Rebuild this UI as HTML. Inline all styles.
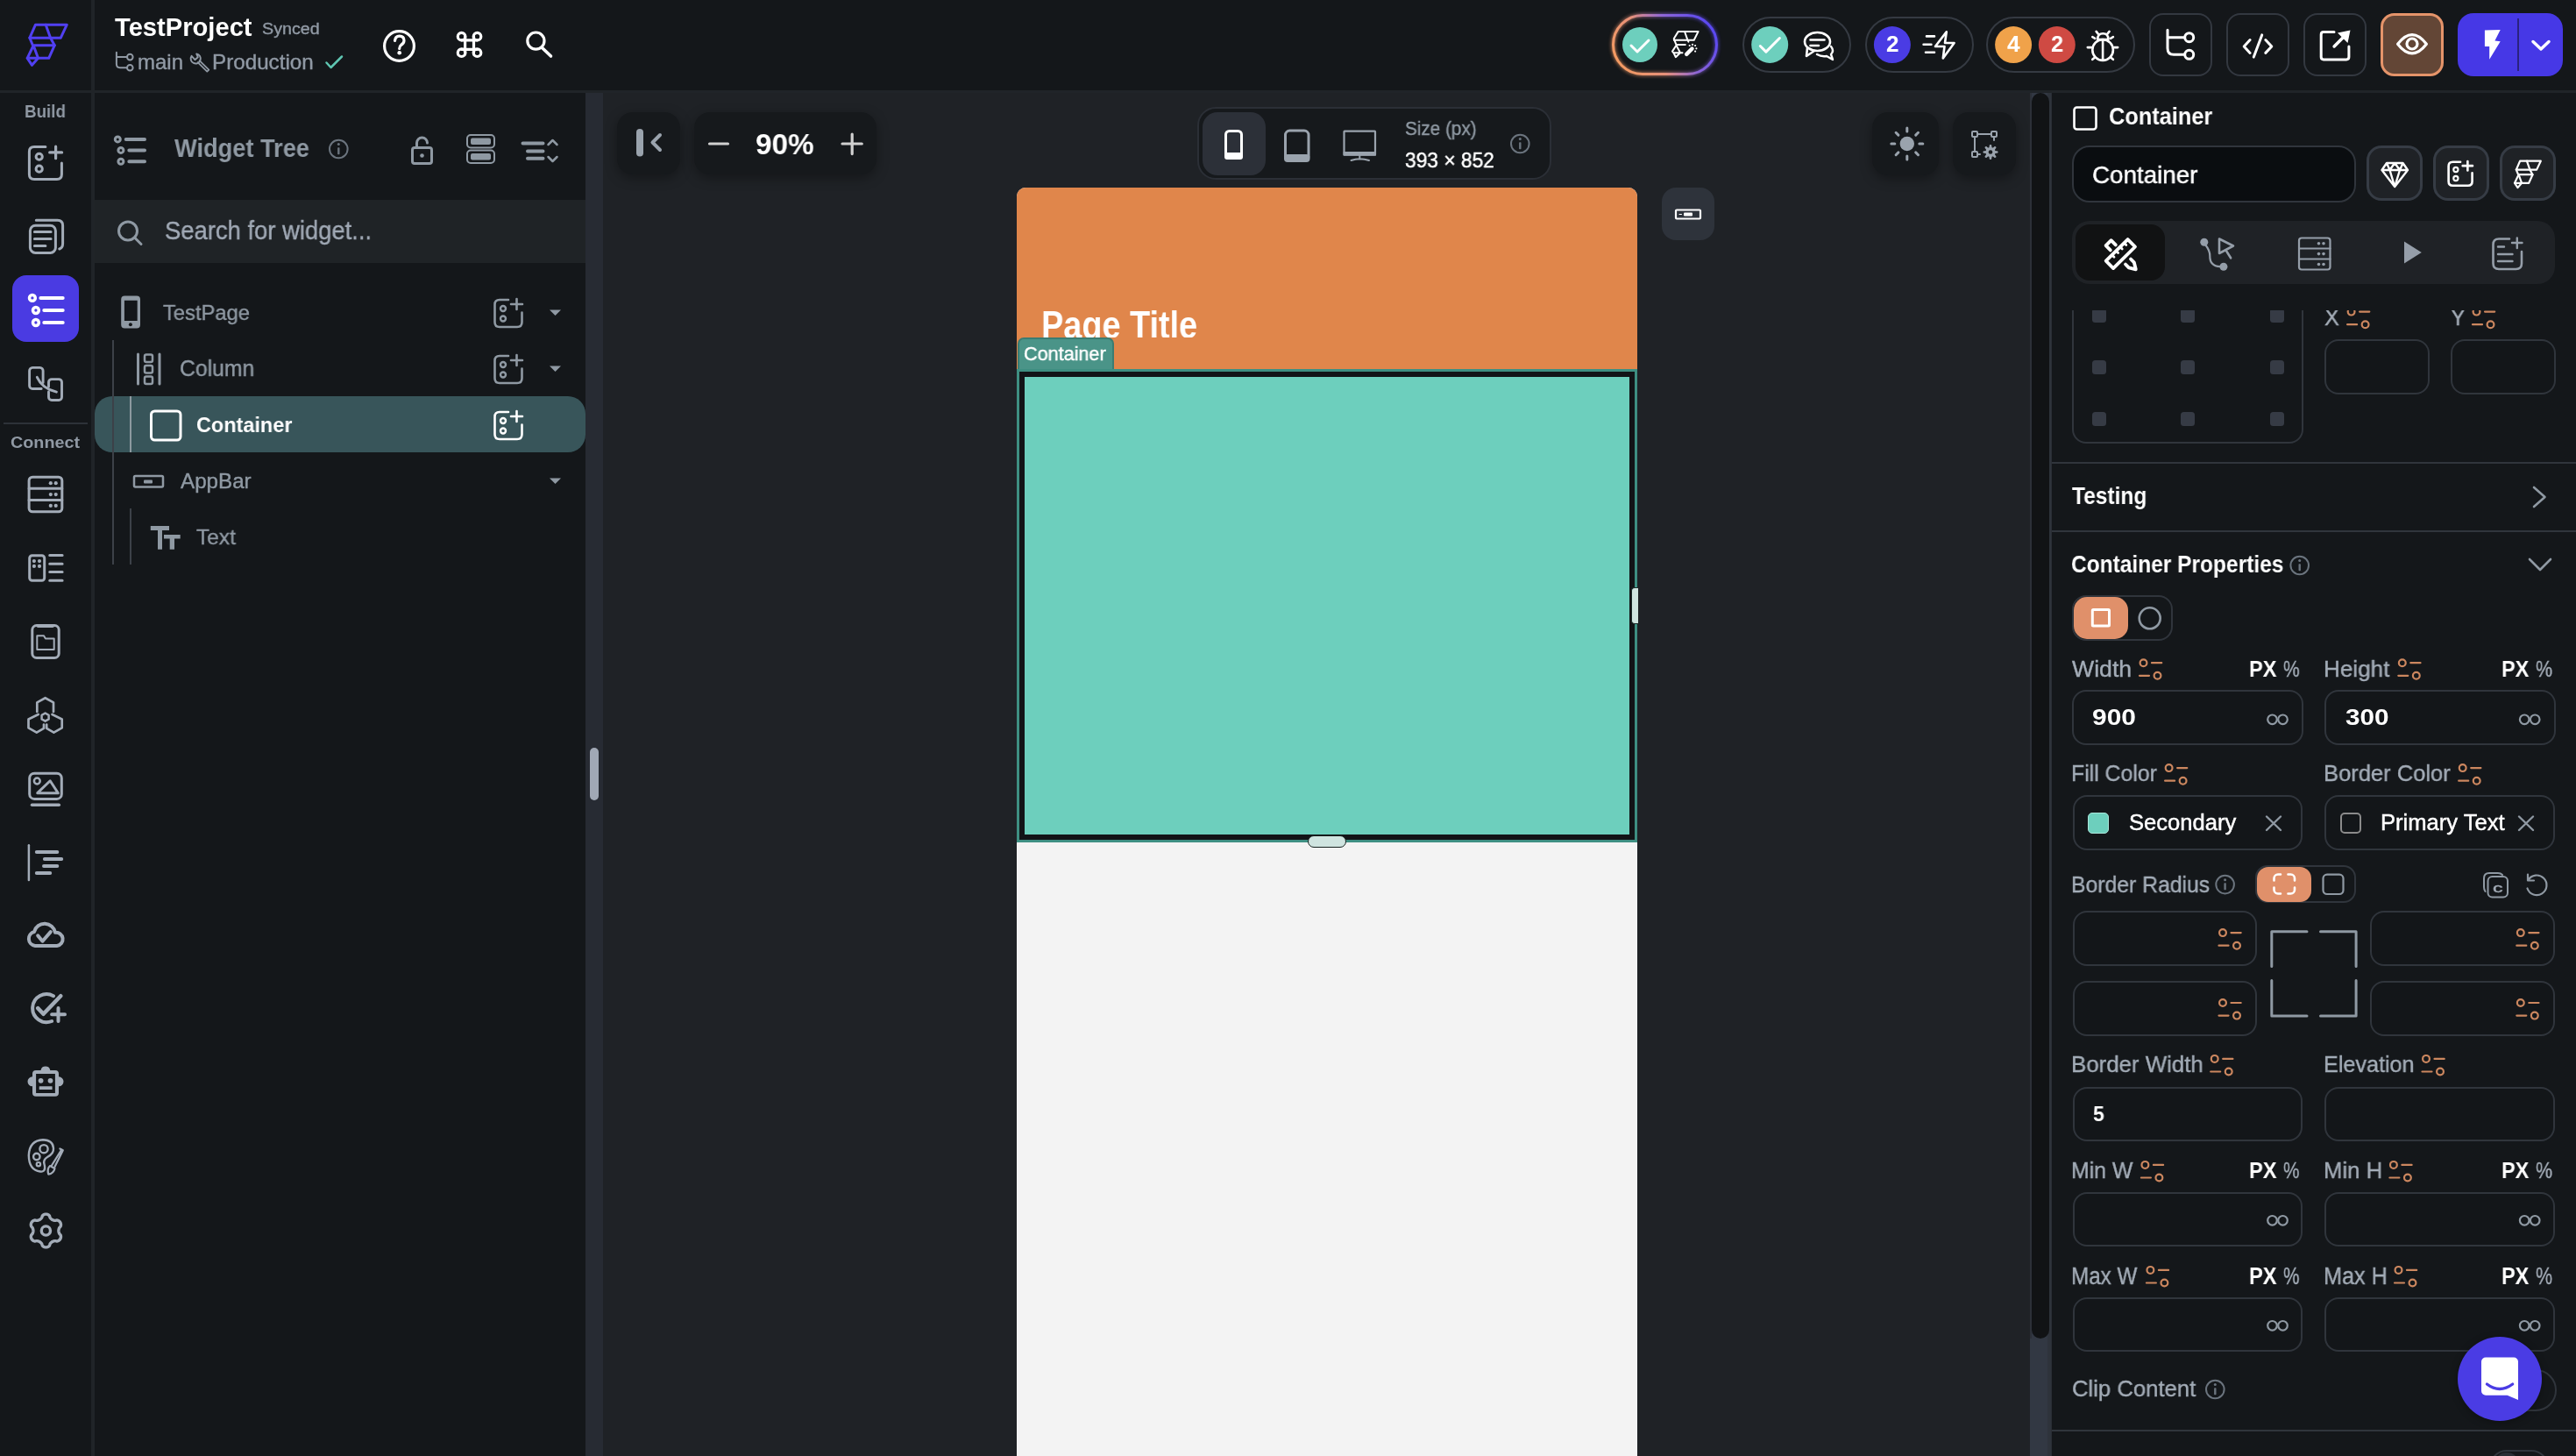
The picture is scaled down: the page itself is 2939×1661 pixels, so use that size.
<!DOCTYPE html><html><head><meta charset="utf-8"><style>
html,body{margin:0;padding:0;width:2939px;height:1661px;overflow:hidden;background:#14171a}
.a{position:absolute}
.t{position:absolute;white-space:nowrap;font-family:"Liberation Sans",sans-serif;transform-origin:0 0;will-change:transform}
.r{-webkit-text-stroke:0.4px currentColor}
.m{-webkit-text-stroke:0.45px currentColor}
</style></head><body>
<div class="a" style="left:0px;top:0px;width:2939px;height:1661px;background:#14171a"></div>
<div class="a" style="left:688px;top:106px;width:1628px;height:1555px;background:#1f2226"></div>
<div class="a" style="left:0px;top:103px;width:2939px;height:3px;background:#202428"></div>
<div class="a" style="left:104px;top:0px;width:4px;height:1661px;background:#202428"></div>
<div class="a" style="left:668px;top:106px;width:20px;height:1555px;background:#272b33"></div>
<div class="a" style="left:673px;top:853px;width:10px;height:60px;background:#a0a8b5;border-radius:5px"></div>
<div class="a" style="left:108px;top:228px;width:560px;height:72px;background:#1f2326"></div>
<div class="a" style="left:2316px;top:106px;width:24px;height:1555px;background:#323843"></div>
<div class="a" style="left:2316px;top:106px;width:2px;height:1421px;background:#2c3038"></div>
<div class="a" style="left:2336px;top:106px;width:4px;height:1555px;background:#2e333b"></div>
<div class="a" style="left:2318px;top:106px;width:20px;height:1421px;background:#111315;border-radius:10px"></div>
<div class="a" style="left:2340px;top:106px;width:1px;height:1555px;background:#2a2e35"></div>
<svg class="a" style="left:0;top:0" width="2939" height="1661" viewBox="0 0 2939 1661">
<path d="M40.5 28.2 L76.3 28.2 L69.3 43.2 L33.9 43.2 Z" stroke="#5140f2" stroke-width="3" stroke-linecap="round" stroke-linejoin="round" fill="none" />
<path d="M52.2 28.2 L57.6 43.2 L62.3 51.7" stroke="#5140f2" stroke-width="3" stroke-linecap="round" stroke-linejoin="round" fill="none" />
<path d="M33.9 43.2 L37.4 51.7 L62.3 51.7 L55.7 66.3 L31.2 66.3 L37.6 53.0" stroke="#5140f2" stroke-width="3" stroke-linecap="round" stroke-linejoin="round" fill="none" />
<path d="M38.4 52.5 L43.5 66.3 L36.5 74.3 L31.2 66.3" stroke="#5140f2" stroke-width="3" stroke-linecap="round" stroke-linejoin="round" fill="none" />
</svg>
<div class="t " style="left:130.7px;top:17.4px;font-size:28.63px;line-height:28.63px;font-weight:700;color:#ffffff;transform:scaleX(1.018);">TestProject</div>
<div class="t r" style="left:299.1px;top:24.4px;font-size:18.90px;line-height:18.90px;font-weight:400;color:#9099a4;transform:scaleX(1.042);">Synced</div>
<svg class="a" style="left:0;top:0" width="2939" height="1661" viewBox="0 0 2939 1661">
<path d="M132.9 59.7 V73 Q132.9 77.2 137 77.2 H145 M132.9 65.1 H145" stroke="#9099a4" stroke-width="2" stroke-linecap="round" stroke-linejoin="round" fill="none" />
<circle cx="148.3" cy="65.1" r="3.3" stroke="#9099a4" stroke-width="2" fill="none"/>
<circle cx="148.3" cy="77.2" r="3.3" stroke="#9099a4" stroke-width="2" fill="none"/>
</svg>
<div class="t r" style="left:157.4px;top:60.3px;font-size:23.69px;line-height:23.69px;font-weight:400;color:#9099a4;transform:scaleX(1.014);">main</div>
<svg class="a" style="left:0;top:0" width="2939" height="1661" viewBox="0 0 2939 1661">
<path d="M218.6 63.8 A5.6 5.6 0 1 0 224.2 61.4 L225.8 65.2 L222.4 68.2 Z" stroke="#9099a4" stroke-width="1.9" stroke-linecap="round" stroke-linejoin="round" fill="none" />
<path d="M227.6 69.2 L238.3 79.6 L236.3 81.6 L225.6 71.2" stroke="#9099a4" stroke-width="1.8" stroke-linecap="round" stroke-linejoin="round" fill="none" />
</svg>
<div class="t r" style="left:241.9px;top:60.3px;font-size:23.69px;line-height:23.69px;font-weight:400;color:#9099a4;transform:scaleX(1.022);">Production</div>
<svg class="a" style="left:0;top:0" width="2939" height="1661" viewBox="0 0 2939 1661">
<path d="M372.5 71.5 L377.5 77 L390 64.5" stroke="#5fc6b2" stroke-width="2.5" stroke-linecap="round" stroke-linejoin="round" fill="none" />
<circle cx="455.5" cy="52.5" r="16.9" stroke="#ffffff" stroke-width="3.2" fill="none"/>
<path d="M450.5 46.5 Q451 41.2 455.7 41.2 Q461 41.2 461 46.3 Q461 49.5 457.5 51.5 Q455.7 52.8 455.7 55.5" stroke="#ffffff" stroke-width="3.2" stroke-linecap="round" stroke-linejoin="round" fill="none" />
<circle cx="455.7" cy="60.2" r="2.3" fill="#ffffff"/>
<circle cx="526.6" cy="41.7" r="4.3" stroke="#ffffff" stroke-width="3.2" fill="none"/>
<circle cx="544.5" cy="41.7" r="4.3" stroke="#ffffff" stroke-width="3.2" fill="none"/>
<circle cx="526.6" cy="60.2" r="4.3" stroke="#ffffff" stroke-width="3.2" fill="none"/>
<circle cx="544.5" cy="60.2" r="4.3" stroke="#ffffff" stroke-width="3.2" fill="none"/>
<path d="M530.6 41.7 V60.2 M540.5 41.7 V60.2 M526.6 45.8 H544.5 M526.6 56.3 H544.5" stroke="#ffffff" stroke-width="3.2" stroke-linecap="round" stroke-linejoin="round" fill="none" />
<circle cx="611.4" cy="46.6" r="9.6" stroke="#ffffff" stroke-width="3.2" fill="none"/>
<path d="M618.5 54.5 L628.5 64" stroke="#ffffff" stroke-width="3.6" stroke-linecap="round" stroke-linejoin="round" fill="none" stroke-linecap="butt"/>
<defs><linearGradient id="pg" gradientUnits="userSpaceOnUse" x1="1850" y1="80" x2="1950" y2="20"><stop offset="0" stop-color="#f49b62"/><stop offset="0.35" stop-color="#e5907a"/><stop offset="0.62" stop-color="#8e66d6"/><stop offset="1" stop-color="#5646f4"/></linearGradient><filter id="glow" x="-20%" y="-40%" width="140%" height="180%"><feGaussianBlur stdDeviation="2" result="b"/><feMerge><feMergeNode in="b"/><feMergeNode in="SourceGraphic"/></feMerge></filter></defs>
<rect x="1840.5" y="17.5" width="118" height="67" rx="33.5" stroke="url(#pg)" stroke-width="3" fill="none" filter="url(#glow)"/>
<circle cx="1871" cy="51" r="20" fill="#6dcfbd"/>
<path d="M1861 52 L1868 59 L1881 46" stroke="#ffffff" stroke-width="3" stroke-linecap="round" stroke-linejoin="round" fill="none" />
<path d="M1914.8 35.9 H1937.6 L1932.7 45.8 H1910 L1909.8 44 Z M1922 36 L1925.5 45.9 L1926.4 47.6" stroke="#ffffff" stroke-width="2" stroke-linecap="round" stroke-linejoin="round" fill="none" />
<path d="M1910.4 45.9 L1912.4 50.9 H1922.8 M1912.6 51.5 L1908 58.6 L1909.6 60.5 L1911.8 65.2 L1917 60.2 H1919.5 M1912.6 52 L1916.8 59.7 M1909.6 60.3 H1917" stroke="#ffffff" stroke-width="2" stroke-linecap="round" stroke-linejoin="round" fill="none" />
<path d="M1924.2 61.9 L1930.5 55.5" stroke="#ffffff" stroke-width="4.4" stroke-linecap="round" stroke-linejoin="round" fill="none" />
<circle cx="1931" cy="50.9" r="1.1" fill="#ffffff"/>
<circle cx="1934.1" cy="52" r="1.1" fill="#ffffff"/>
<circle cx="1935.4" cy="55.3" r="1.1" fill="#ffffff"/>
<circle cx="1934.1" cy="58.6" r="1.1" fill="#ffffff"/>
<circle cx="1927.7" cy="52" r="1.1" fill="#ffffff"/>
<rect x="1989" y="20" width="122" height="62" rx="31" stroke="#353a42" stroke-width="2" fill="none"/>
<circle cx="2019.2" cy="50.9" r="21" fill="#6dcfbd"/>
<path d="M2008.3 52.5 L2014.9 59.1 L2030.4 43.5" stroke="#ffffff" stroke-width="3" stroke-linecap="round" stroke-linejoin="round" fill="none" />
<ellipse cx="2073.5" cy="47.5" rx="14.5" ry="10.5" stroke="#ffffff" stroke-width="2.6" fill="none"/>
<path d="M2062 55 L2061 64 L2070 58" stroke="#ffffff" stroke-width="2.6" stroke-linecap="round" stroke-linejoin="round" fill="none" />
<path d="M2065.5 45.5 H2081.5 M2065.5 52 H2075" stroke="#ffffff" stroke-width="2.6" stroke-linecap="round" stroke-linejoin="round" fill="none" />
<path d="M2089 53 Q2093 58 2089 62 L2091 68 L2084 64 Q2078 65 2073 62" stroke="#ffffff" stroke-width="2.4" stroke-linecap="round" stroke-linejoin="round" fill="none" />
<rect x="2129" y="20" width="122" height="62" rx="31" stroke="#353a42" stroke-width="2" fill="none"/>
<circle cx="2158.9" cy="51.1" r="21" fill="#4a3ce4"/>
</svg>
<div class="t " style="left:2151.8px;top:37.2px;font-size:26.31px;line-height:26.31px;font-weight:700;color:#ffffff;transform:scaleX(0.990);">2</div>
<svg class="a" style="left:0;top:0" width="2939" height="1661" viewBox="0 0 2939 1661">
<path d="M2198 41.4 H2207 M2194.6 50.7 H2203.4 M2197 59.7 H2207" stroke="#ffffff" stroke-width="2.6" stroke-linecap="round" stroke-linejoin="round" fill="none" />
<path d="M2220.8 36.2 L2208 53 H2218.5 L2216.8 66.4 L2229.6 49 H2219 Z" stroke="#ffffff" stroke-width="2.6" stroke-linecap="round" stroke-linejoin="round" fill="none" />
<rect x="2267" y="20" width="168" height="62" rx="31" stroke="#353a42" stroke-width="2" fill="none"/>
<circle cx="2297.1" cy="51.1" r="21" fill="#f0a24a"/>
</svg>
<div class="t " style="left:2289.7px;top:37.2px;font-size:26.31px;line-height:26.31px;font-weight:700;color:#ffffff;transform:scaleX(0.995);">4</div>
<svg class="a" style="left:0;top:0" width="2939" height="1661" viewBox="0 0 2939 1661">
<circle cx="2346.8" cy="51.1" r="21" fill="#cf4a43"/>
</svg>
<div class="t " style="left:2339.9px;top:37.2px;font-size:26.31px;line-height:26.31px;font-weight:700;color:#ffffff;transform:scaleX(0.966);">2</div>
<svg class="a" style="left:0;top:0" width="2939" height="1661" viewBox="0 0 2939 1661">
<ellipse cx="2399.1" cy="57" rx="11.8" ry="11.9" stroke="#ffffff" stroke-width="2.6" fill="none"/>
<path d="M2393.2 45 Q2393.2 38.3 2399.3 38.3 Q2405.4 38.3 2405.4 45 Z M2399.1 45.5 V68.5 M2381.8 54.1 H2386 M2412.2 54.1 H2416.2 M2391.6 35.9 L2393.6 38.3 M2406.6 35.9 L2404.6 38.3 M2387.3 42.2 L2390.2 43.8 M2410.9 42.2 L2408 43.8 M2387.3 67.8 L2390.4 65.2 M2410.9 67.8 L2407.8 65.2" stroke="#ffffff" stroke-width="2.6" stroke-linecap="round" stroke-linejoin="round" fill="none" />
<rect x="2453" y="16" width="70" height="70" rx="15" stroke="#333840" stroke-width="2" fill="none"/>
<rect x="2541" y="16" width="70" height="70" rx="15" stroke="#333840" stroke-width="2" fill="none"/>
<rect x="2629" y="16" width="70" height="70" rx="15" stroke="#333840" stroke-width="2" fill="none"/>
<path d="M2473 34.3 V55 Q2473 62.3 2480 62.3 H2492.5 M2473 42.8 H2492.5" stroke="#ffffff" stroke-width="3" stroke-linecap="round" stroke-linejoin="round" fill="none" />
<circle cx="2497.7" cy="42.7" r="5" stroke="#ffffff" stroke-width="3" fill="none"/>
<circle cx="2497.7" cy="62.3" r="5" stroke="#ffffff" stroke-width="3" fill="none"/>
<path d="M2567.1 45.5 L2560.2 53 L2567.1 60.4 M2580.7 39.9 L2571.3 65.1 M2584.8 45.5 L2591.8 53 L2584.8 60.4" stroke="#ffffff" stroke-width="3" stroke-linecap="round" stroke-linejoin="round" fill="none" />
<path d="M2663 36.6 H2651 Q2648.2 36.6 2648.2 39.4 V65 Q2648.2 67.9 2651 67.9 H2677 Q2679.9 67.9 2679.9 65 V53" stroke="#ffffff" stroke-width="3" stroke-linecap="round" stroke-linejoin="round" fill="none" />
<path d="M2663.1 53 L2676 40" stroke="#ffffff" stroke-width="3.5" stroke-linecap="round" stroke-linejoin="round" fill="none" />
<path d="M2681.5 34.5 L2667 37.5 L2678.5 49 Z" fill="#ffffff" />
<rect x="2717.5" y="16.5" width="69" height="69" rx="14" stroke="#e5946a" stroke-width="3" fill="#634636"/>
<path d="M2735.6 50.2 Q2752 29 2768.4 50.2 Q2752 71.4 2735.6 50.2 Z" stroke="#ffffff" stroke-width="3.2" stroke-linecap="round" stroke-linejoin="round" fill="none" />
<circle cx="2752" cy="50" r="6" stroke="#ffffff" stroke-width="3.2" fill="none"/>
<rect x="2804" y="15" width="120" height="72" rx="18" fill="#4638e6"/>
<rect x="2872" y="21" width="2" height="60" fill="#2a2380"/>
<path d="M2834.9 34.4 L2852.7 34 L2846.4 46.4 L2852.7 47.3 L2840.2 67.8 L2840.2 53.1 L2834.9 53.1 Z" fill="#ffffff" />
<path d="M2890 47.5 L2899 56 L2908 47.5" stroke="#ffffff" stroke-width="3.5" stroke-linecap="round" stroke-linejoin="round" fill="none" />
</svg>
<div class="t " style="left:28.3px;top:117.4px;font-size:20.35px;line-height:20.35px;font-weight:700;color:#9099a4;transform:scaleX(0.923);">Build</div>
<div class="t " style="left:12.2px;top:496.4px;font-size:18.90px;line-height:18.90px;font-weight:700;color:#9099a4;transform:scaleX(1.046);">Connect</div>
<div class="a" style="left:4px;top:482px;width:96px;height:2px;background:#2d3238"></div>
<svg class="a" style="left:0;top:0" width="2939" height="1661" viewBox="0 0 2939 1661">
<path d="M51.9 167.5 H39 Q33.4 167.5 33.4 173 V199 Q33.4 204.4 39 204.4 H65 Q70.4 204.4 70.4 199 V186" stroke="#a3acb8" stroke-width="3" stroke-linecap="round" stroke-linejoin="round" fill="none" />
<circle cx="44.7" cy="178.75" r="3.6" stroke="#a3acb8" stroke-width="3" fill="none"/>
<circle cx="44.7" cy="192.7" r="3.6" stroke="#a3acb8" stroke-width="3" fill="none"/>
<path d="M56.7 173.9 H70.6 M63.6 167.2 V180.7" stroke="#a3acb8" stroke-width="3.2" stroke-linecap="round" stroke-linejoin="round" fill="none" />
<rect x="34.4" y="257.3" width="29" height="31.1" rx="6" stroke="#a3acb8" stroke-width="3" fill="none"/>
<path d="M41.3 251.3 H65.6 Q71.6 251.3 71.6 257.3 V278 Q71.6 282.5 67.75 284" stroke="#a3acb8" stroke-width="3" stroke-linecap="round" stroke-linejoin="round" fill="none" />
<path d="M39.4 264.6 H58.1 M39.4 272.5 H58.1 M39.4 280.5 H51.9" stroke="#a3acb8" stroke-width="3" stroke-linecap="round" stroke-linejoin="round" fill="none" />
<rect x="14" y="314" width="76" height="76" rx="16" fill="#4a3be2"/>
<circle cx="36.9" cy="339.9" r="3.4" stroke="#ffffff" stroke-width="3.5" fill="none"/>
<circle cx="40.9" cy="354" r="3.4" stroke="#ffffff" stroke-width="3.5" fill="none"/>
<circle cx="40.9" cy="368" r="3.4" stroke="#ffffff" stroke-width="3.5" fill="none"/>
<path d="M46.4 339.9 H71.7 M50.3 354 H71.7 M50.3 368 H71.7" stroke="#ffffff" stroke-width="4" stroke-linecap="round" stroke-linejoin="round" fill="none" />
<path d="M49.1 436.5 V423 A3.5 3.5 0 0 0 45.6 419.4 H37.1 A3.5 3.5 0 0 0 33.6 423 V440 A3.5 3.5 0 0 0 37.1 443.5 H47.2" stroke="#a3acb8" stroke-width="2.9" stroke-linecap="round" stroke-linejoin="round" fill="none" />
<path d="M55.5 441.2 V436.1 A3.5 3.5 0 0 1 59 432.6 H67 A3.5 3.5 0 0 1 70.5 436.1 V453 A3.5 3.5 0 0 1 67 456.5 H59 A3.5 3.5 0 0 1 55.5 453 V447" stroke="#a3acb8" stroke-width="2.9" stroke-linecap="round" stroke-linejoin="round" fill="none" />
<path d="M42.3 430.3 Q48 443 64.4 447.2" stroke="#a3acb8" stroke-width="2.9" stroke-linecap="round" stroke-linejoin="round" fill="none" />
<rect x="33.1" y="544.2" width="37.7" height="39.6" rx="4" stroke="#a3acb8" stroke-width="3" fill="none"/>
<path d="M33.1 557.3 H70.8 M33.1 570.5 H70.8" stroke="#a3acb8" stroke-width="3" stroke-linecap="round" stroke-linejoin="round" fill="none" />
<circle cx="57.8" cy="551.2" r="2.1" fill="#a3acb8"/>
<circle cx="63.7" cy="551.2" r="2.1" fill="#a3acb8"/>
<circle cx="57.8" cy="564.1" r="2.1" fill="#a3acb8"/>
<circle cx="63.7" cy="564.1" r="2.1" fill="#a3acb8"/>
<circle cx="57.8" cy="576.9" r="2.1" fill="#a3acb8"/>
<circle cx="63.7" cy="576.9" r="2.1" fill="#a3acb8"/>
<rect x="33.7" y="633.7" width="17" height="28.5" rx="3" stroke="#a3acb8" stroke-width="3" fill="none"/>
<circle cx="38.9" cy="640.1" r="2.1" fill="#a3acb8"/>
<circle cx="38.9" cy="645.9" r="2.1" fill="#a3acb8"/>
<circle cx="45" cy="640.1" r="2.1" fill="#a3acb8"/>
<circle cx="45" cy="645.9" r="2.1" fill="#a3acb8"/>
<path d="M56.7 633.6 H71.1 M56.7 643.2 H71.1 M56.7 652.5 H71.1 M56.7 662.2 H71.1" stroke="#a3acb8" stroke-width="3" stroke-linecap="round" stroke-linejoin="round" fill="none" />
<rect x="36.8" y="713.5" width="30.4" height="37" rx="5" stroke="#a3acb8" stroke-width="3" fill="none"/>
<path d="M43.5 714 H60" stroke="#a3acb8" stroke-width="4" stroke-linecap="round" stroke-linejoin="round" fill="none" />
<path d="M42.3 740.9 V725.2 H50 L51.9 728.4 H61.7 V740.9 Z" stroke="#a3acb8" stroke-width="2" stroke-linecap="round" stroke-linejoin="round" fill="none" />
<path d="M42.3 812 V801.4 L51.6 796.2 L61 801.4 V812" stroke="#a3acb8" stroke-width="2.7" stroke-linecap="round" stroke-linejoin="round" fill="none" />
<path d="M43.7 815 L32.5 820.5 V830.3 L41.8 835.6 L50 830.8 V826.5" stroke="#a3acb8" stroke-width="2.7" stroke-linecap="round" stroke-linejoin="round" fill="none" />
<path d="M59.5 815 L70.7 820.5 V830.3 L61.4 835.6 L53.2 830.8 V826.5" stroke="#a3acb8" stroke-width="2.7" stroke-linecap="round" stroke-linejoin="round" fill="none" />
<path d="M51.6 813.5 L55.6 815.8 V820.4 L51.6 822.7 L47.6 820.4 V815.8 Z" stroke="#a3acb8" stroke-width="2.5" stroke-linecap="round" stroke-linejoin="round" fill="none" />
<rect x="33.7" y="882.2" width="36.6" height="29.2" rx="5.5" stroke="#a3acb8" stroke-width="3" fill="none"/>
<circle cx="42.3" cy="891" r="3.4" stroke="#a3acb8" stroke-width="2.5" fill="none"/>
<path d="M42.75 904.7 L57.2 890.75 L66.3 904.7 Z" stroke="#a3acb8" stroke-width="3" stroke-linecap="round" stroke-linejoin="round" fill="none" />
<path d="M36.5 918.3 H67.3" stroke="#a3acb8" stroke-width="3.5" stroke-linecap="round" stroke-linejoin="round" fill="none" />
<path d="M32.9 964.3 V1003.9" stroke="#a3acb8" stroke-width="2.5" stroke-linecap="round" stroke-linejoin="round" fill="none" />
<path d="M41.8 972 H65.3 M50.9 979.9 H70.2 M50 987.9 H65.3 M41.8 996 H57.2" stroke="#a3acb8" stroke-width="4" stroke-linecap="round" stroke-linejoin="round" fill="none" />
<path d="M40 1078.9 A8.1 8.1 0 0 1 39 1063 A12.3 12.3 0 0 1 63 1063.8 A7.6 7.6 0 0 1 65 1078.9 Z" stroke="#a3acb8" stroke-width="4" stroke-linecap="round" stroke-linejoin="round" fill="none" />
<path d="M43.2 1067.4 L48.5 1073.7 L57.7 1063.1" stroke="#a3acb8" stroke-width="4" stroke-linecap="round" stroke-linejoin="round" fill="none" />
<path d="M61 1136.2 A16 16 0 1 0 59.1 1165" stroke="#a3acb8" stroke-width="4" stroke-linecap="round" stroke-linejoin="round" fill="none" />
<path d="M43.2 1150.1 L49.5 1156.8 L69.2 1136.2" stroke="#a3acb8" stroke-width="4.5" stroke-linecap="round" stroke-linejoin="round" fill="none" />
<path d="M59.1 1157.3 H74 M66.5 1150 V1165" stroke="#a3acb8" stroke-width="4" stroke-linecap="round" stroke-linejoin="round" fill="none" stroke-linecap="butt"/>
<path d="M41 1221 H46.5 A5.5 5.5 0 0 1 57.3 1221 H63 A4 4 0 0 1 67 1225 V1228.3 A5.5 5.5 0 0 1 67 1239.3 V1246.8 A4 4 0 0 1 63 1250.8 H41 A4 4 0 0 1 37 1246.8 V1239.3 A5.5 5.5 0 0 1 37 1228.3 V1225 A4 4 0 0 1 41 1221 Z M41.1 1225.1 V1246.9 H62.9 V1225.1 Z" fill="#a3acb8" fill-rule="evenodd"/>
<circle cx="46.6" cy="1232.8" r="2.9" fill="#a3acb8"/>
<circle cx="57.5" cy="1232.8" r="2.9" fill="#a3acb8"/>
<rect x="44.7" y="1239.25" width="14.9" height="3.85" rx="0.5" fill="#a3acb8"/>
<path d="M46 1336.5 Q33 1335 32.8 1318 Q33.5 1301 49 1300.2 Q60.5 1300.5 61 1310 Q61.5 1316 54 1320 Q49 1323 50.5 1328 Q52 1333 50 1335.5 Q48.5 1337 46 1336.5 Z" stroke="#a3acb8" stroke-width="2.4" stroke-linecap="round" stroke-linejoin="round" fill="none" />
<circle cx="50" cy="1310.7" r="4.6" stroke="#a3acb8" stroke-width="2.4" fill="none"/>
<circle cx="41.8" cy="1319.5" r="3.7" stroke="#a3acb8" stroke-width="2.4" fill="none"/>
<circle cx="43.9" cy="1328.2" r="2.2" stroke="#a3acb8" stroke-width="2.2" fill="none"/>
<path d="M70.4 1311.3 L59 1329.5 M68.4 1310.5 L71.8 1312.2 L62.5 1331" stroke="#a3acb8" stroke-width="2.2" stroke-linecap="round" stroke-linejoin="round" fill="none" />
<path d="M57 1330 Q53.5 1333 55.2 1339.6 Q61 1339 62.5 1333 Z" stroke="#a3acb8" stroke-width="2.2" stroke-linecap="round" stroke-linejoin="round" fill="none" />
<path d="M66.90 1404.00 L66.91 1404.38 L66.95 1404.76 L67.00 1405.15 L67.08 1405.54 L67.19 1405.95 L67.31 1406.36 L67.47 1406.79 L67.67 1407.25 L67.94 1407.73 L68.53 1408.32 L69.11 1408.95 L69.32 1409.50 L69.43 1410.03 L69.48 1410.56 L69.48 1411.07 L69.43 1411.58 L69.33 1412.07 L69.18 1412.55 L69.00 1413.01 L68.77 1413.45 L68.50 1413.87 L68.20 1414.26 L67.85 1414.62 L67.48 1414.95 L67.07 1415.25 L66.62 1415.52 L66.14 1415.74 L65.62 1415.90 L65.04 1415.99 L64.21 1415.81 L63.40 1415.59 L62.85 1415.60 L62.36 1415.66 L61.90 1415.74 L61.48 1415.83 L61.08 1415.94 L60.70 1416.07 L60.33 1416.22 L59.98 1416.38 L59.65 1416.56 L59.33 1416.76 L59.01 1416.98 L58.71 1417.22 L58.40 1417.49 L58.11 1417.78 L57.81 1418.10 L57.52 1418.45 L57.22 1418.85 L56.94 1419.32 L56.72 1420.13 L56.47 1420.94 L56.10 1421.40 L55.69 1421.77 L55.26 1422.07 L54.81 1422.33 L54.35 1422.54 L53.87 1422.70 L53.39 1422.81 L52.89 1422.88 L52.40 1422.90 L51.91 1422.88 L51.41 1422.81 L50.93 1422.70 L50.45 1422.54 L49.99 1422.33 L49.54 1422.07 L49.11 1421.77 L48.70 1421.40 L48.33 1420.94 L48.08 1420.13 L47.86 1419.32 L47.58 1418.85 L47.28 1418.45 L46.99 1418.10 L46.69 1417.78 L46.40 1417.49 L46.09 1417.22 L45.79 1416.98 L45.47 1416.76 L45.15 1416.56 L44.82 1416.38 L44.47 1416.22 L44.10 1416.07 L43.72 1415.94 L43.32 1415.83 L42.90 1415.74 L42.44 1415.66 L41.95 1415.60 L41.40 1415.59 L40.59 1415.81 L39.76 1415.99 L39.18 1415.90 L38.66 1415.74 L38.18 1415.52 L37.73 1415.25 L37.32 1414.95 L36.95 1414.62 L36.60 1414.26 L36.30 1413.87 L36.03 1413.45 L35.80 1413.01 L35.62 1412.55 L35.47 1412.07 L35.37 1411.58 L35.32 1411.07 L35.32 1410.56 L35.37 1410.03 L35.48 1409.50 L35.69 1408.95 L36.27 1408.32 L36.86 1407.73 L37.13 1407.25 L37.33 1406.79 L37.49 1406.36 L37.61 1405.95 L37.72 1405.54 L37.80 1405.15 L37.85 1404.76 L37.89 1404.38 L37.90 1404.00 L37.89 1403.62 L37.85 1403.24 L37.80 1402.85 L37.72 1402.46 L37.61 1402.05 L37.49 1401.64 L37.33 1401.21 L37.13 1400.75 L36.86 1400.27 L36.27 1399.68 L35.69 1399.05 L35.48 1398.50 L35.37 1397.97 L35.32 1397.44 L35.32 1396.93 L35.37 1396.42 L35.47 1395.93 L35.62 1395.45 L35.80 1394.99 L36.03 1394.55 L36.30 1394.13 L36.60 1393.74 L36.95 1393.38 L37.32 1393.05 L37.73 1392.75 L38.18 1392.48 L38.66 1392.26 L39.18 1392.10 L39.76 1392.01 L40.59 1392.19 L41.40 1392.41 L41.95 1392.40 L42.44 1392.34 L42.90 1392.26 L43.32 1392.17 L43.72 1392.06 L44.10 1391.93 L44.47 1391.78 L44.82 1391.62 L45.15 1391.44 L45.47 1391.24 L45.79 1391.02 L46.09 1390.78 L46.40 1390.51 L46.69 1390.22 L46.99 1389.90 L47.28 1389.55 L47.58 1389.15 L47.86 1388.68 L48.08 1387.87 L48.33 1387.06 L48.70 1386.60 L49.11 1386.23 L49.54 1385.93 L49.99 1385.67 L50.45 1385.46 L50.93 1385.30 L51.41 1385.19 L51.91 1385.12 L52.40 1385.10 L52.89 1385.12 L53.39 1385.19 L53.87 1385.30 L54.35 1385.46 L54.81 1385.67 L55.26 1385.93 L55.69 1386.23 L56.10 1386.60 L56.47 1387.06 L56.72 1387.87 L56.94 1388.68 L57.22 1389.15 L57.52 1389.55 L57.81 1389.90 L58.11 1390.22 L58.40 1390.51 L58.71 1390.78 L59.01 1391.02 L59.33 1391.24 L59.65 1391.44 L59.98 1391.62 L60.33 1391.78 L60.70 1391.93 L61.08 1392.06 L61.48 1392.17 L61.90 1392.26 L62.36 1392.34 L62.85 1392.40 L63.40 1392.41 L64.21 1392.19 L65.04 1392.01 L65.62 1392.10 L66.14 1392.26 L66.62 1392.48 L67.07 1392.75 L67.48 1393.05 L67.85 1393.38 L68.20 1393.74 L68.50 1394.13 L68.77 1394.55 L69.00 1394.99 L69.18 1395.45 L69.33 1395.93 L69.43 1396.42 L69.48 1396.93 L69.48 1397.44 L69.43 1397.97 L69.32 1398.50 L69.11 1399.05 L68.53 1399.68 L67.94 1400.27 L67.67 1400.75 L67.47 1401.21 L67.31 1401.64 L67.19 1402.05 L67.08 1402.46 L67.00 1402.85 L66.95 1403.24 L66.91 1403.62 L66.90 1404.00 Z" stroke="#a3acb8" stroke-width="3.4" stroke-linecap="round" stroke-linejoin="round" fill="none" />
<circle cx="52.4" cy="1404" r="5.1" stroke="#a3acb8" stroke-width="3.4" fill="none"/>
<circle cx="134.3" cy="158.9" r="3" stroke="#8f99a3" stroke-width="3" fill="none"/>
<circle cx="137.9" cy="171.4" r="3" stroke="#8f99a3" stroke-width="3" fill="none"/>
<circle cx="137.9" cy="184.3" r="3" stroke="#8f99a3" stroke-width="3" fill="none"/>
<path d="M143.7 158.9 H165 M147.3 171.4 H165 M147.3 184.3 H165" stroke="#8f99a3" stroke-width="4" stroke-linecap="round" stroke-linejoin="round" fill="none" />
</svg>
<div class="t " style="left:198.5px;top:155.0px;font-size:29.07px;line-height:29.07px;font-weight:700;color:#8f99a3;transform:scaleX(0.936);">Widget Tree</div>
<svg class="a" style="left:0;top:0" width="2939" height="1661" viewBox="0 0 2939 1661">
<circle cx="386.3" cy="170" r="10.3" stroke="#6b747e" stroke-width="2" fill="none"/>
<rect x="385.1" y="168.2" width="2.4" height="8" rx="0.8" fill="#6b747e"/>
<circle cx="386.3" cy="164.6" r="1.5" fill="#6b747e"/>
<rect x="470.5" y="168.5" width="22" height="18" rx="2.5" stroke="#8f99a3" stroke-width="3" fill="none"/>
<path d="M475.5 168 V163 A6 6 0 0 1 487.5 163" stroke="#8f99a3" stroke-width="3" stroke-linecap="round" stroke-linejoin="round" fill="none" />
<circle cx="481.5" cy="177.5" r="2.3" fill="#8f99a3"/>
<rect x="533" y="154" width="31" height="14.5" rx="4" stroke="#8f99a3" stroke-width="2" fill="none"/>
<rect x="533" y="171.5" width="31" height="14.5" rx="4" stroke="#8f99a3" stroke-width="2" fill="none"/>
<rect x="537" y="157.5" width="23" height="7.5" rx="2" fill="#8f99a3"/>
<rect x="537" y="175" width="23" height="7.5" rx="2" fill="#8f99a3"/>
<path d="M596.5 163.5 H619.5 M602 172.5 H619.5 M602 180.7 H619.5" stroke="#8f99a3" stroke-width="4" stroke-linecap="round" stroke-linejoin="round" fill="none" />
<path d="M625.5 165 L630.5 160 L635.5 165 M625.5 179 L630.5 184 L635.5 179" stroke="#8f99a3" stroke-width="2.5" stroke-linecap="round" stroke-linejoin="round" fill="none" />
<circle cx="146" cy="263.5" r="10.5" stroke="#8f99a3" stroke-width="3" fill="none"/>
<path d="M153.5 271 L161 278.5" stroke="#8f99a3" stroke-width="3" stroke-linecap="round" stroke-linejoin="round" fill="none" />
</svg>
<div class="t r" style="left:187.5px;top:249.3px;font-size:29.22px;line-height:29.22px;font-weight:400;color:#a0a9b5;transform:scaleX(0.938);">Search for widget...</div>
<svg class="a" style="left:0;top:0" width="2939" height="1661" viewBox="0 0 2939 1661">
<rect x="108" y="452" width="560" height="64" rx="20" fill="#38555a"/>
</svg>
<div class="a" style="left:128px;top:388px;width:2px;height:256px;background:#3c4148"></div>
<div class="a" style="left:148px;top:452px;width:2px;height:64px;background:#8d9aa0"></div>
<div class="a" style="left:148px;top:580px;width:2px;height:64px;background:#3c4148"></div>
<svg class="a" style="left:0;top:0" width="2939" height="1661" viewBox="0 0 2939 1661">
<path d="M142.2 337.4 H156 A4 4 0 0 1 160 341.4 V370.5 A4 4 0 0 1 156 374.5 H142.2 A4 4 0 0 1 138.2 370.5 V341.4 A4 4 0 0 1 142.2 337.4 Z M141.9 342.8 V365.9 H156.7 V342.8 Z" fill="#8f99a3" fill-rule="evenodd"/>
<circle cx="148.9" cy="370.2" r="2" fill="#14171a"/>
</svg>
<div class="t r" style="left:185.5px;top:344.7px;font-size:24.71px;line-height:24.71px;font-weight:400;color:#8f99a3;transform:scaleX(0.961);">TestPage</div>
<svg class="a" style="left:0;top:0" width="2939" height="1661" viewBox="0 0 2939 1661">
<path d="M580.00 342.00 H570.00 Q564.50 342.00 564.50 347.50 V367.50 Q564.50 373.00 570.00 373.00 H590.00 Q595.50 373.00 595.50 367.50 V356.50" stroke="#8f99a3" stroke-width="2.6" stroke-linecap="round" stroke-linejoin="round" fill="none" />
<circle cx="574.0" cy="352.0" r="3.0" stroke="#8f99a3" stroke-width="2.4" fill="none"/>
<circle cx="574.0" cy="363.5" r="3.0" stroke="#8f99a3" stroke-width="2.4" fill="none"/>
<path d="M583.00 347.00 H596.00 M589.50 341.00 V353.00" stroke="#8f99a3" stroke-width="2.6" stroke-linecap="round" stroke-linejoin="round" fill="none" />
<path d="M627.0 353.5 H640.0 L633.5 360.0 Z" fill="#8f99a3" />
<path d="M157.5 404 V438 M182 404 V438" stroke="#8f99a3" stroke-width="3" stroke-linecap="round" stroke-linejoin="round" fill="none" />
<rect x="165" y="404.5" width="9" height="8.5" rx="2" stroke="#8f99a3" stroke-width="2.5" fill="none"/>
<rect x="165" y="417" width="9" height="8.5" rx="2" stroke="#8f99a3" stroke-width="2.5" fill="none"/>
<rect x="165" y="429.5" width="9" height="8.5" rx="2" stroke="#8f99a3" stroke-width="2.5" fill="none"/>
</svg>
<div class="t r" style="left:204.5px;top:408.3px;font-size:25.15px;line-height:25.15px;font-weight:400;color:#8f99a3;transform:scaleX(0.983);">Column</div>
<svg class="a" style="left:0;top:0" width="2939" height="1661" viewBox="0 0 2939 1661">
<path d="M580.00 406.00 H570.00 Q564.50 406.00 564.50 411.50 V431.50 Q564.50 437.00 570.00 437.00 H590.00 Q595.50 437.00 595.50 431.50 V420.50" stroke="#8f99a3" stroke-width="2.6" stroke-linecap="round" stroke-linejoin="round" fill="none" />
<circle cx="574.0" cy="416.0" r="3.0" stroke="#8f99a3" stroke-width="2.4" fill="none"/>
<circle cx="574.0" cy="427.5" r="3.0" stroke="#8f99a3" stroke-width="2.4" fill="none"/>
<path d="M583.00 411.00 H596.00 M589.50 405.00 V417.00" stroke="#8f99a3" stroke-width="2.6" stroke-linecap="round" stroke-linejoin="round" fill="none" />
<path d="M627.0 417.5 H640.0 L633.5 424.0 Z" fill="#8f99a3" />
<rect x="172.5" y="469" width="33.5" height="33" rx="4" stroke="#ffffff" stroke-width="3" fill="none"/>
</svg>
<div class="t " style="left:223.9px;top:472.7px;font-size:24.71px;line-height:24.71px;font-weight:700;color:#ffffff;transform:scaleX(0.949);">Container</div>
<svg class="a" style="left:0;top:0" width="2939" height="1661" viewBox="0 0 2939 1661">
<path d="M580.00 470.00 H570.00 Q564.50 470.00 564.50 475.50 V495.50 Q564.50 501.00 570.00 501.00 H590.00 Q595.50 501.00 595.50 495.50 V484.50" stroke="#ffffff" stroke-width="2.6" stroke-linecap="round" stroke-linejoin="round" fill="none" />
<circle cx="574.0" cy="480.0" r="3.0" stroke="#ffffff" stroke-width="2.4" fill="none"/>
<circle cx="574.0" cy="491.5" r="3.0" stroke="#ffffff" stroke-width="2.4" fill="none"/>
<path d="M583.00 475.00 H596.00 M589.50 469.00 V481.00" stroke="#ffffff" stroke-width="2.6" stroke-linecap="round" stroke-linejoin="round" fill="none" />
<rect x="153" y="543" width="33" height="12.5" rx="1.5" stroke="#8f99a3" stroke-width="2.5" fill="none"/>
<rect x="164" y="547.5" width="10" height="4" rx="1" fill="#8f99a3"/>
</svg>
<div class="t r" style="left:205.7px;top:537.5px;font-size:23.69px;line-height:23.69px;font-weight:400;color:#8f99a3;transform:scaleX(1.021);">AppBar</div>
<svg class="a" style="left:0;top:0" width="2939" height="1661" viewBox="0 0 2939 1661">
<path d="M627.0 545.5 H640.0 L633.5 552.0 Z" fill="#8f99a3" />
<path d="M171.8 600 H193 V605 H185 V626.7 H180 V605 H171.8 Z M187 610 H205.7 V614.5 H199 V626.7 H193.7 V614.5 H187 Z" fill="#8f99a3" />
</svg>
<div class="t r" style="left:224.3px;top:600.7px;font-size:24.71px;line-height:24.71px;font-weight:400;color:#8f99a3;transform:scaleX(0.991);">Text</div>
<div class="a" style="left:704px;top:128px;width:72px;height:71px;background:#16191c;border-radius:18px;box-shadow:0 4px 14px rgba(0,0,0,0.35)"></div>
<svg class="a" style="left:0;top:0" width="2939" height="1661" viewBox="0 0 2939 1661">
<rect x="726" y="147" width="8" height="31.5" rx="4" fill="#9aa3ad"/>
<path d="M753 154 L744.5 162.5 L753 171" stroke="#9aa3ad" stroke-width="4" stroke-linecap="round" stroke-linejoin="round" fill="none" />
</svg>
<div class="a" style="left:792px;top:128px;width:208px;height:71px;background:#16191c;border-radius:18px;box-shadow:0 4px 14px rgba(0,0,0,0.35)"></div>
<svg class="a" style="left:0;top:0" width="2939" height="1661" viewBox="0 0 2939 1661">
<path d="M809.5 164 H830.5" stroke="#d0d0d0" stroke-width="3.2" stroke-linecap="round" stroke-linejoin="round" fill="none" stroke-linecap="butt"/>
<path d="M961 164 H983.3 M972.2 153 V175.6" stroke="#d0d0d0" stroke-width="3.2" stroke-linecap="round" stroke-linejoin="round" fill="none" stroke-linecap="butt"/>
</svg>
<div class="t " style="left:862.2px;top:148.1px;font-size:33.72px;line-height:33.72px;font-weight:700;color:#ffffff;transform:scaleX(0.987);">90%</div>
<div class="a" style="left:1366px;top:122px;width:404px;height:83px;background:#16191c;border:2px solid #2b2f36;border-radius:21px;box-sizing:border-box"></div>
<div class="a" style="left:1371.5px;top:127.5px;width:72px;height:72.5px;background:#2c3038;border-radius:17px"></div>
<svg class="a" style="left:0;top:0" width="2939" height="1661" viewBox="0 0 2939 1661">
<rect x="1398.5" y="149.5" width="18" height="31" rx="4" stroke="#ffffff" stroke-width="3" fill="none"/>
<rect x="1397" y="174" width="21" height="8" rx="3" fill="#ffffff"/>
<rect x="1466.5" y="149" width="26.5" height="34.5" rx="5" stroke="#9aa3ad" stroke-width="3" fill="none"/>
<rect x="1465" y="176" width="29.5" height="9" rx="4" fill="#9aa3ad"/>
<rect x="1533.5" y="149.7" width="35.5" height="27" rx="0.5" stroke="#9aa3ad" stroke-width="2.2" fill="none"/>
<rect x="1532.6" y="173" width="37.4" height="4.5" rx="0.5" fill="#9aa3ad"/>
<path d="M1551.3 177 V181.5 M1541.5 183 Q1551.3 179.5 1562 183" stroke="#9aa3ad" stroke-width="2" stroke-linecap="round" stroke-linejoin="round" fill="none" />
</svg>
<div class="t r" style="left:1602.8px;top:136.0px;font-size:21.66px;line-height:21.66px;font-weight:400;color:#8f99a3;transform:scaleX(0.955);">Size (px)</div>
<div class="t m" style="left:1603.1px;top:170.6px;font-size:24.13px;line-height:24.13px;font-weight:400;color:#ffffff;transform:scaleX(0.943);">393 × 852</div>
<svg class="a" style="left:0;top:0" width="2939" height="1661" viewBox="0 0 2939 1661">
<circle cx="1734.3" cy="164" r="10.3" stroke="#6b747e" stroke-width="2" fill="none"/>
<rect x="1733.1" y="162.2" width="2.4" height="8" rx="0.8" fill="#6b747e"/>
<circle cx="1734.3" cy="158.6" r="1.5" fill="#6b747e"/>
</svg>
<div class="a" style="left:2136px;top:128px;width:76px;height:72px;background:#16191c;border-radius:18px;box-shadow:0 4px 14px rgba(0,0,0,0.35)"></div>
<svg class="a" style="left:0;top:0" width="2939" height="1661" viewBox="0 0 2939 1661">
<circle cx="2175.8" cy="164" r="8.2" fill="#9aa3ad"/>
<path d="M2189.8 164.0 L2193.8 164.0" stroke="#9aa3ad" stroke-width="3" stroke-linecap="round" stroke-linejoin="round" fill="none" />
<path d="M2185.7 173.9 L2188.5 176.7" stroke="#9aa3ad" stroke-width="3" stroke-linecap="round" stroke-linejoin="round" fill="none" />
<path d="M2175.8 178.0 L2175.8 182.0" stroke="#9aa3ad" stroke-width="3" stroke-linecap="round" stroke-linejoin="round" fill="none" />
<path d="M2165.9 173.9 L2163.1 176.7" stroke="#9aa3ad" stroke-width="3" stroke-linecap="round" stroke-linejoin="round" fill="none" />
<path d="M2161.8 164.0 L2157.8 164.0" stroke="#9aa3ad" stroke-width="3" stroke-linecap="round" stroke-linejoin="round" fill="none" />
<path d="M2165.9 154.1 L2163.1 151.3" stroke="#9aa3ad" stroke-width="3" stroke-linecap="round" stroke-linejoin="round" fill="none" />
<path d="M2175.8 150.0 L2175.8 146.0" stroke="#9aa3ad" stroke-width="3" stroke-linecap="round" stroke-linejoin="round" fill="none" />
<path d="M2185.7 154.1 L2188.5 151.3" stroke="#9aa3ad" stroke-width="3" stroke-linecap="round" stroke-linejoin="round" fill="none" />
</svg>
<div class="a" style="left:2228px;top:128px;width:72px;height:72px;background:#16191c;border-radius:18px;box-shadow:0 4px 14px rgba(0,0,0,0.35)"></div>
<svg class="a" style="left:0;top:0" width="2939" height="1661" viewBox="0 0 2939 1661">
<rect x="2250" y="150" width="6" height="6" rx="1" stroke="#9aa3ad" stroke-width="2" fill="none"/>
<rect x="2272" y="150" width="6" height="6" rx="1" stroke="#9aa3ad" stroke-width="2" fill="none"/>
<rect x="2250" y="173" width="6" height="6" rx="1" stroke="#9aa3ad" stroke-width="2" fill="none"/>
<path d="M2256 153 H2272 M2253 156 V173 M2256 176 H2259 M2275 156 V160" stroke="#9aa3ad" stroke-width="2" stroke-linecap="round" stroke-linejoin="round" fill="none" />
<path d="M2279.60 173.50 L2279.52 173.95 L2279.26 174.37 L2278.79 174.73 L2277.34 174.85 L2276.67 175.02 L2276.29 175.22 L2276.06 175.44 L2275.95 175.70 L2275.95 176.02 L2276.08 176.43 L2276.44 177.03 L2277.38 178.14 L2277.46 178.73 L2277.34 179.21 L2277.08 179.58 L2276.71 179.84 L2276.23 179.96 L2275.64 179.88 L2274.53 178.94 L2273.93 178.58 L2273.52 178.45 L2273.20 178.45 L2272.94 178.56 L2272.72 178.79 L2272.52 179.17 L2272.35 179.84 L2272.23 181.29 L2271.87 181.76 L2271.45 182.02 L2271.00 182.10 L2270.55 182.02 L2270.13 181.76 L2269.77 181.29 L2269.65 179.84 L2269.48 179.17 L2269.28 178.79 L2269.06 178.56 L2268.80 178.45 L2268.48 178.45 L2268.07 178.58 L2267.47 178.94 L2266.36 179.88 L2265.77 179.96 L2265.29 179.84 L2264.92 179.58 L2264.66 179.21 L2264.54 178.73 L2264.62 178.14 L2265.56 177.03 L2265.92 176.43 L2266.05 176.02 L2266.05 175.70 L2265.94 175.44 L2265.71 175.22 L2265.33 175.02 L2264.66 174.85 L2263.21 174.73 L2262.74 174.37 L2262.48 173.95 L2262.40 173.50 L2262.48 173.05 L2262.74 172.63 L2263.21 172.27 L2264.66 172.15 L2265.33 171.98 L2265.71 171.78 L2265.94 171.56 L2266.05 171.30 L2266.05 170.98 L2265.92 170.57 L2265.56 169.97 L2264.62 168.86 L2264.54 168.27 L2264.66 167.79 L2264.92 167.42 L2265.29 167.16 L2265.77 167.04 L2266.36 167.12 L2267.47 168.06 L2268.07 168.42 L2268.48 168.55 L2268.80 168.55 L2269.06 168.44 L2269.28 168.21 L2269.48 167.83 L2269.65 167.16 L2269.77 165.71 L2270.13 165.24 L2270.55 164.98 L2271.00 164.90 L2271.45 164.98 L2271.87 165.24 L2272.23 165.71 L2272.35 167.16 L2272.52 167.83 L2272.72 168.21 L2272.94 168.44 L2273.20 168.55 L2273.52 168.55 L2273.93 168.42 L2274.53 168.06 L2275.64 167.12 L2276.23 167.04 L2276.71 167.16 L2277.08 167.42 L2277.34 167.79 L2277.46 168.27 L2277.38 168.86 L2276.44 169.97 L2276.08 170.57 L2275.95 170.98 L2275.95 171.30 L2276.06 171.56 L2276.29 171.78 L2276.67 171.98 L2277.34 172.15 L2278.79 172.27 L2279.26 172.63 L2279.52 173.05 L2279.60 173.50 Z" fill="#9aa3ad" />
<circle cx="2271" cy="173.5" r="2.3" fill="#16191c"/>
</svg>
<div class="a" style="left:1896px;top:214px;width:60px;height:60px;background:#2e333b;border-radius:16px"></div>
<svg class="a" style="left:0;top:0" width="2939" height="1661" viewBox="0 0 2939 1661">
<rect x="1912" y="239.5" width="28" height="10" rx="1" stroke="#ffffff" stroke-width="2.2" fill="none"/>
<rect x="1921" y="242.5" width="10" height="4" rx="1" fill="#ffffff"/>
<path d="M1916 244.5 H1918.5" stroke="#ffffff" stroke-width="1" stroke-linecap="round" stroke-linejoin="round" fill="none" />
</svg>
<div class="a" style="left:1160px;top:214px;width:708px;height:1447px;background:#f3f3f3;border-radius:10px 10px 0 0;overflow:hidden"></div>
<div class="a" style="left:1160px;top:214px;width:708px;height:207px;background:#e0864b;border-radius:10px 10px 0 0"></div>
<div class="a" style="left:1160px;top:214px;width:708px;height:171px;overflow:hidden"><div class="t " style="left:28.4px;top:136.1px;font-size:43.46px;line-height:43.46px;font-weight:700;color:#ffffff;transform:scaleX(0.871);">Page Title</div></div>
<div class="a" style="left:1160px;top:421px;width:708px;height:540px;background:#3e8f82"></div>
<div class="a" style="left:1163px;top:423.6px;width:702px;height:534px;background:#121417"></div>
<div class="a" style="left:1169px;top:430px;width:690px;height:522px;background:#6dcfbd"></div>
<div class="a" style="left:1161px;top:385.4px;width:110px;height:36px;background:#4a9488;border:2px solid #3b7c72;border-bottom:none;border-radius:7px 7px 0 0;box-sizing:border-box"></div>
<div class="t m" style="left:1168.4px;top:392.6px;font-size:22.09px;line-height:22.09px;font-weight:400;color:#ffffff;transform:scaleX(0.978);">Container</div>
<div class="a" style="left:1861px;top:669.6px;width:8px;height:42.4px;background:#cfe4e0;border-radius:4px 0 0 4px;border:1px solid #1a2a28;border-right:none;box-sizing:border-box"></div>
<div class="a" style="left:1491.9px;top:953.2px;width:44.2px;height:13.7px;background:#cfe4e0;border-radius:7px;border:1.5px solid #16211f;box-sizing:border-box"></div>
<svg class="a" style="left:0;top:0" width="2939" height="1661" viewBox="0 0 2939 1661">
<rect x="2366.5" y="122.5" width="25" height="25" rx="3" stroke="#ffffff" stroke-width="2.6" fill="none"/>
</svg>
<div class="t " style="left:2405.7px;top:120.3px;font-size:27.03px;line-height:27.03px;font-weight:700;color:#ffffff;transform:scaleX(0.938);">Container</div>
<div class="a" style="left:2364.4px;top:166.3px;width:323.2px;height:65.1px;background:#0a0d10;border:2px solid #30353c;border-radius:20px;box-sizing:border-box"></div>
<div class="t m" style="left:2387.4px;top:184.5px;font-size:28.49px;line-height:28.49px;font-weight:400;color:#ffffff;transform:scaleX(0.975);">Container</div>
<div class="a" style="left:2700px;top:166.3px;width:63.7px;height:63.2px;background:#1f2226;border:3px solid #363c45;border-radius:17px;box-sizing:border-box"></div>
<div class="a" style="left:2776px;top:166.3px;width:63.7px;height:63.2px;background:#1f2226;border:3px solid #363c45;border-radius:17px;box-sizing:border-box"></div>
<div class="a" style="left:2852px;top:166.3px;width:63.7px;height:63.2px;background:#1f2226;border:3px solid #363c45;border-radius:17px;box-sizing:border-box"></div>
<svg class="a" style="left:0;top:0" width="2939" height="1661" viewBox="0 0 2939 1661">
<path d="M2723 186 H2741.5 L2747 194 L2732.2 213 L2717.5 194 Z M2717.5 194 H2747 M2726.5 194 L2732.2 213 L2738 194 M2723 186 L2726.5 194 L2732.2 186 L2738 194 L2741.5 186" stroke="#ffffff" stroke-width="2.4" stroke-linecap="round" stroke-linejoin="round" fill="none" />
<path d="M2807.09 184.81 H2798.39 Q2793.61 184.81 2793.61 189.59 V206.99 Q2793.61 211.78 2798.39 211.78 H2815.79 Q2820.58 211.78 2820.58 206.99 V197.42" stroke="#ffffff" stroke-width="2.6" stroke-linecap="round" stroke-linejoin="round" fill="none" />
<circle cx="2801.8700000000003" cy="193.505" r="2.61" stroke="#ffffff" stroke-width="2.088" fill="none"/>
<circle cx="2801.8700000000003" cy="203.51" r="2.61" stroke="#ffffff" stroke-width="2.088" fill="none"/>
<path d="M2809.70 189.16 H2821.01 M2815.36 183.94 V194.38" stroke="#ffffff" stroke-width="2.6" stroke-linecap="round" stroke-linejoin="round" fill="none" />
<path d="M2875.1 183.7 L2898.8 183.7 L2894.1 193.6 L2870.8 193.6 Z" stroke="#ffffff" stroke-width="2.2" stroke-linecap="round" stroke-linejoin="round" fill="none" />
<path d="M2882.9 183.7 L2886.4 193.6 L2889.5 199.2" stroke="#ffffff" stroke-width="2.2" stroke-linecap="round" stroke-linejoin="round" fill="none" />
<path d="M2870.8 193.6 L2873.1 199.2 L2889.5 199.2 L2885.2 208.8 L2869.0 208.8 L2873.2 200.1" stroke="#ffffff" stroke-width="2.2" stroke-linecap="round" stroke-linejoin="round" fill="none" />
<path d="M2873.7 199.7 L2877.1 208.8 L2872.5 214.1 L2869.0 208.8" stroke="#ffffff" stroke-width="2.2" stroke-linecap="round" stroke-linejoin="round" fill="none" />
</svg>
<div class="a" style="left:2364.4px;top:252.3px;width:551.1px;height:71.4px;background:#1f2226;border-radius:20px"></div>
<div class="a" style="left:2368px;top:256px;width:102px;height:63.7px;background:#111213;border-radius:16px"></div>
<svg class="a" style="left:0;top:0" width="2939" height="1661" viewBox="0 0 2939 1661">
<path d="M2427.6 273.1 L2436 281.5 L2411.1 306.1 L2402.7 297.6 Z" stroke="#ffffff" stroke-width="3.8" stroke-linecap="round" stroke-linejoin="round" fill="none" />
<path d="M2409.6 290.8 L2412.0 293.2" stroke="#ffffff" stroke-width="2.8" stroke-linecap="round" stroke-linejoin="round" fill="none" />
<path d="M2414.2 286.2 L2416.6 288.6" stroke="#ffffff" stroke-width="2.8" stroke-linecap="round" stroke-linejoin="round" fill="none" />
<path d="M2418.8 281.6 L2421.2 284.0" stroke="#ffffff" stroke-width="2.8" stroke-linecap="round" stroke-linejoin="round" fill="none" />
<path d="M2423.4 277.0 L2425.8 279.4" stroke="#ffffff" stroke-width="2.8" stroke-linecap="round" stroke-linejoin="round" fill="none" />
<path d="M2407.8 285.4 L2402.6 280.2 L2408.6 274.2 L2413.8 279.4" stroke="#ffffff" stroke-width="3.8" stroke-linecap="round" stroke-linejoin="round" fill="none" />
<path d="M2431 295.5 L2434.8 299.3 L2436.8 307.3 L2428.8 305.3 L2425 301.5" stroke="#ffffff" stroke-width="3.8" stroke-linecap="round" stroke-linejoin="round" fill="none" />
<circle cx="2514.8" cy="276.2" r="4.5" fill="#959ea9"/>
<circle cx="2536.9" cy="304.2" r="4.5" fill="#959ea9"/>
<path d="M2516 279 Q2521.5 286 2521.3 292 Q2521 303.5 2533 304.2" stroke="#959ea9" stroke-width="2.2" stroke-linecap="round" stroke-linejoin="round" fill="none" />
<path d="M2532 272.5 L2548 280.5 L2532 289 Z M2540.5 287 L2545.1 294.3" stroke="#959ea9" stroke-width="2.6" stroke-linecap="round" stroke-linejoin="round" fill="none" />
<rect x="2623" y="271.5" width="35.5" height="36" rx="3" stroke="#959ea9" stroke-width="2.2" fill="none"/>
<path d="M2623 283.5 H2658.5 M2623 295.5 H2658.5" stroke="#959ea9" stroke-width="2.2" stroke-linecap="round" stroke-linejoin="round" fill="none" />
<circle cx="2645.5" cy="277.8" r="1.8" fill="#959ea9"/>
<circle cx="2651" cy="277.8" r="1.8" fill="#959ea9"/>
<circle cx="2645.5" cy="289.6" r="1.8" fill="#959ea9"/>
<circle cx="2651" cy="289.6" r="1.8" fill="#959ea9"/>
<circle cx="2645.5" cy="301.5" r="1.8" fill="#959ea9"/>
<circle cx="2651" cy="301.5" r="1.8" fill="#959ea9"/>
<path d="M2743 275.6 L2762.8 288 L2743 300.5 Z" fill="#959ea9" />
<path d="M2863 272.5 H2851 Q2844.5 272.5 2844.5 279 V300.5 Q2844.5 307 2851 307 H2870.5 Q2877 307 2877 300.5 V287" stroke="#959ea9" stroke-width="2.6" stroke-linecap="round" stroke-linejoin="round" fill="none" />
<path d="M2850 281.5 H2857 M2850 290 H2866.5 M2850 298 H2866.5" stroke="#959ea9" stroke-width="2.4" stroke-linecap="round" stroke-linejoin="round" fill="none" />
<path d="M2866 277 H2877.5 M2871.8 271.5 V283" stroke="#959ea9" stroke-width="2.4" stroke-linecap="round" stroke-linejoin="round" fill="none" />
</svg>
<div class="a" style="left:2341px;top:354px;width:598px;height:1307px;overflow:hidden">
<div class="a" style="left:-2341px;top:-354px;width:2939px;height:1661px">
<div class="a" style="left:2364.4px;top:300px;width:263.2px;height:206px;border:2px solid #30353c;border-radius:16px;box-sizing:border-box"></div>
<div class="a" style="left:2386.5px;top:352px;width:16px;height:16px;background:#363b45;border-radius:3.5px"></div>
<div class="a" style="left:2386.5px;top:411px;width:16px;height:16px;background:#363b45;border-radius:3.5px"></div>
<div class="a" style="left:2386.5px;top:469.5px;width:16px;height:16px;background:#363b45;border-radius:3.5px"></div>
<div class="a" style="left:2488px;top:352px;width:16px;height:16px;background:#363b45;border-radius:3.5px"></div>
<div class="a" style="left:2488px;top:411px;width:16px;height:16px;background:#363b45;border-radius:3.5px"></div>
<div class="a" style="left:2488px;top:469.5px;width:16px;height:16px;background:#363b45;border-radius:3.5px"></div>
<div class="a" style="left:2589.5px;top:352px;width:16px;height:16px;background:#363b45;border-radius:3.5px"></div>
<div class="a" style="left:2589.5px;top:411px;width:16px;height:16px;background:#363b45;border-radius:3.5px"></div>
<div class="a" style="left:2589.5px;top:469.5px;width:16px;height:16px;background:#363b45;border-radius:3.5px"></div>
</div></div>
<div class="t r" style="left:2652.2px;top:349.3px;font-size:26.31px;line-height:26.31px;font-weight:400;color:#a3acb7;transform:scaleX(0.963);">X</div>
<div class="t r" style="left:2796.4px;top:349.3px;font-size:26.31px;line-height:26.31px;font-weight:400;color:#a3acb7;transform:scaleX(0.950);">Y</div>
<svg class="a" style="left:0;top:0" width="2939" height="1661" viewBox="0 0 2939 1661">
<circle cx="2682.6" cy="355.59999999999997" r="3.9" stroke="#cc875f" stroke-width="2.2" fill="none"/>
<circle cx="2698.6" cy="370.2" r="3.9" stroke="#cc875f" stroke-width="2.2" fill="none"/>
<path d="M2692.1 355.59999999999997 H2703.2999999999997 M2678.1 370.2 H2689.1" stroke="#cc875f" stroke-width="2.2" stroke-linecap="round" stroke-linejoin="round" fill="none" />
<circle cx="2825.5" cy="355.59999999999997" r="3.9" stroke="#cc875f" stroke-width="2.2" fill="none"/>
<circle cx="2841.5" cy="370.2" r="3.9" stroke="#cc875f" stroke-width="2.2" fill="none"/>
<path d="M2835.0 355.59999999999997 H2846.2 M2821.0 370.2 H2832.0" stroke="#cc875f" stroke-width="2.2" stroke-linecap="round" stroke-linejoin="round" fill="none" />
</svg>
<div class="a" style="left:2341px;top:324px;width:598px;height:30px;background:#14171a"></div>
<div class="a" style="left:2652px;top:387.2px;width:119.8px;height:63.3px;background:#131619;border:2px solid #30353c;border-radius:16px;box-sizing:border-box"></div>
<div class="a" style="left:2796px;top:387.2px;width:120px;height:63.3px;background:#131619;border:2px solid #30353c;border-radius:16px;box-sizing:border-box"></div>
<div class="a" style="left:2341px;top:527px;width:598px;height:2px;background:#30353c"></div>
<div class="t " style="left:2364.2px;top:553.0px;font-size:27.03px;line-height:27.03px;font-weight:700;color:#ffffff;transform:scaleX(0.908);">Testing</div>
<svg class="a" style="left:0;top:0" width="2939" height="1661" viewBox="0 0 2939 1661">
<path d="M2891 556 L2903.5 567 L2891 578" stroke="#8f99a3" stroke-width="2.6" stroke-linecap="round" stroke-linejoin="round" fill="none" />
</svg>
<div class="a" style="left:2341px;top:605px;width:598px;height:2px;background:#30353c"></div>
<div class="t " style="left:2363.4px;top:631.2px;font-size:27.03px;line-height:27.03px;font-weight:700;color:#ffffff;transform:scaleX(0.907);">Container Properties</div>
<svg class="a" style="left:0;top:0" width="2939" height="1661" viewBox="0 0 2939 1661">
<circle cx="2623.7" cy="645" r="10.3" stroke="#6b747e" stroke-width="2" fill="none"/>
<rect x="2622.5" y="643.2" width="2.4" height="8" rx="0.8" fill="#6b747e"/>
<circle cx="2623.7" cy="639.6" r="1.5" fill="#6b747e"/>
<path d="M2886 638 L2898 650 L2910 638" stroke="#8f99a3" stroke-width="2.6" stroke-linecap="round" stroke-linejoin="round" fill="none" />
</svg>
<div class="a" style="left:2364.4px;top:679px;width:115.1px;height:51.7px;border:2px solid #30353c;border-radius:16px;box-sizing:border-box"></div>
<div class="a" style="left:2366px;top:681px;width:62px;height:48px;background:#e0906a;border-radius:15px"></div>
<svg class="a" style="left:0;top:0" width="2939" height="1661" viewBox="0 0 2939 1661">
<rect x="2387.3" y="695.5" width="19.2" height="18.6" rx="1" stroke="#ffffff" stroke-width="3" fill="none"/>
<circle cx="2452.7" cy="705.3" r="12" stroke="#8f99a3" stroke-width="2.6" fill="none"/>
</svg>
<div class="t r" style="left:2364.3px;top:749.9px;font-size:26.31px;line-height:26.31px;font-weight:400;color:#a3acb7;transform:scaleX(1.014);">Width</div>
<svg class="a" style="left:0;top:0" width="2939" height="1661" viewBox="0 0 2939 1661">
<circle cx="2445.5" cy="756.1999999999999" r="3.9" stroke="#cc875f" stroke-width="2.2" fill="none"/>
<circle cx="2461.5" cy="770.8" r="3.9" stroke="#cc875f" stroke-width="2.2" fill="none"/>
<path d="M2455.0 756.1999999999999 H2466.2 M2441.0 770.8 H2452.0" stroke="#cc875f" stroke-width="2.2" stroke-linecap="round" stroke-linejoin="round" fill="none" />
</svg>
<div class="t " style="left:2565.9px;top:749.9px;font-size:26.31px;line-height:26.31px;font-weight:700;color:#ffffff;transform:scaleX(0.897);">PX</div>
<div class="t r" style="left:2605.1px;top:749.9px;font-size:26.31px;line-height:26.31px;font-weight:400;color:#a3acb7;transform:scaleX(0.797);">%</div>
<div class="t r" style="left:2650.7px;top:749.9px;font-size:26.31px;line-height:26.31px;font-weight:400;color:#a3acb7;transform:scaleX(0.992);">Height</div>
<svg class="a" style="left:0;top:0" width="2939" height="1661" viewBox="0 0 2939 1661">
<circle cx="2740.8" cy="756.1999999999999" r="3.9" stroke="#cc875f" stroke-width="2.2" fill="none"/>
<circle cx="2756.8" cy="770.8" r="3.9" stroke="#cc875f" stroke-width="2.2" fill="none"/>
<path d="M2750.3 756.1999999999999 H2761.5 M2736.3 770.8 H2747.3" stroke="#cc875f" stroke-width="2.2" stroke-linecap="round" stroke-linejoin="round" fill="none" />
</svg>
<div class="t " style="left:2854.3px;top:749.9px;font-size:26.31px;line-height:26.31px;font-weight:700;color:#ffffff;transform:scaleX(0.893);">PX</div>
<div class="t r" style="left:2892.6px;top:749.9px;font-size:26.31px;line-height:26.31px;font-weight:400;color:#a3acb7;transform:scaleX(0.816);">%</div>
<div class="a" style="left:2364.4px;top:787.2px;width:263.2px;height:63.2px;background:#131619;border:2px solid #30353c;border-radius:16px;box-sizing:border-box"></div>
<div class="a" style="left:2652px;top:787.2px;width:264px;height:63.2px;background:#131619;border:2px solid #30353c;border-radius:16px;box-sizing:border-box"></div>
<div class="t " style="left:2387.4px;top:805.9px;font-size:25.29px;line-height:25.29px;font-weight:700;color:#ffffff;transform:scaleX(1.184);">900</div>
<svg class="a" style="left:0;top:0" width="2939" height="1661" viewBox="0 0 2939 1661">
<circle cx="2592.5" cy="820.8" r="5.3" stroke="#8f99a3" stroke-width="2.2" fill="none"/>
<circle cx="2604.5" cy="820.8" r="5.3" stroke="#8f99a3" stroke-width="2.2" fill="none"/>
</svg>
<div class="t " style="left:2675.8px;top:805.9px;font-size:25.29px;line-height:25.29px;font-weight:700;color:#ffffff;transform:scaleX(1.174);">300</div>
<svg class="a" style="left:0;top:0" width="2939" height="1661" viewBox="0 0 2939 1661">
<circle cx="2880.2" cy="820.8" r="5.3" stroke="#8f99a3" stroke-width="2.2" fill="none"/>
<circle cx="2892.2" cy="820.8" r="5.3" stroke="#8f99a3" stroke-width="2.2" fill="none"/>
</svg>
<div class="t r" style="left:2362.5px;top:869.2px;font-size:26.45px;line-height:26.45px;font-weight:400;color:#a3acb7;transform:scaleX(0.939);">Fill Color</div>
<svg class="a" style="left:0;top:0" width="2939" height="1661" viewBox="0 0 2939 1661">
<circle cx="2474.6" cy="876.1" r="3.9" stroke="#cc875f" stroke-width="2.2" fill="none"/>
<circle cx="2490.6" cy="890.7" r="3.9" stroke="#cc875f" stroke-width="2.2" fill="none"/>
<path d="M2484.1 876.1 H2495.2999999999997 M2470.1 890.7 H2481.1" stroke="#cc875f" stroke-width="2.2" stroke-linecap="round" stroke-linejoin="round" fill="none" />
</svg>
<div class="t r" style="left:2651.0px;top:869.2px;font-size:26.45px;line-height:26.45px;font-weight:400;color:#a3acb7;transform:scaleX(0.966);">Border Color</div>
<svg class="a" style="left:0;top:0" width="2939" height="1661" viewBox="0 0 2939 1661">
<circle cx="2809.7" cy="876.1" r="3.9" stroke="#cc875f" stroke-width="2.2" fill="none"/>
<circle cx="2825.7" cy="890.7" r="3.9" stroke="#cc875f" stroke-width="2.2" fill="none"/>
<path d="M2819.2 876.1 H2830.3999999999996 M2805.2 890.7 H2816.2" stroke="#cc875f" stroke-width="2.2" stroke-linecap="round" stroke-linejoin="round" fill="none" />
</svg>
<div class="a" style="left:2364.5px;top:907.4px;width:262.7px;height:63.1px;background:#131619;border:2px solid #30353c;border-radius:16px;box-sizing:border-box"></div>
<div class="a" style="left:2652.2px;top:907.4px;width:263px;height:63.1px;background:#131619;border:2px solid #30353c;border-radius:16px;box-sizing:border-box"></div>
<div class="a" style="left:2382px;top:927px;width:24px;height:24px;background:#6dcfbd;border:1.5px solid #a9e6da;border-radius:5px;box-sizing:border-box"></div>
<div class="t m" style="left:2428.9px;top:925.9px;font-size:25.58px;line-height:25.58px;font-weight:400;color:#ffffff;">Secondary</div>
<svg class="a" style="left:0;top:0" width="2939" height="1661" viewBox="0 0 2939 1661">
<path d="M2586 931.5 L2602 947 M2602 931.5 L2586 947" stroke="#8f99a3" stroke-width="2.4" stroke-linecap="round" stroke-linejoin="round" fill="none" />
</svg>
<div class="a" style="left:2670px;top:927px;width:23.8px;height:24px;border:2px solid #8b8b8b;border-radius:5px;box-sizing:border-box"></div>
<div class="t m" style="left:2716.3px;top:925.9px;font-size:25.58px;line-height:25.58px;font-weight:400;color:#ffffff;">Primary Text</div>
<svg class="a" style="left:0;top:0" width="2939" height="1661" viewBox="0 0 2939 1661">
<path d="M2874 931.5 L2890 947 M2890 931.5 L2874 947" stroke="#8f99a3" stroke-width="2.4" stroke-linecap="round" stroke-linejoin="round" fill="none" />
</svg>
<div class="t r" style="left:2362.5px;top:995.5px;font-size:26.16px;line-height:26.16px;font-weight:400;color:#a3acb7;transform:scaleX(0.946);">Border Radius</div>
<svg class="a" style="left:0;top:0" width="2939" height="1661" viewBox="0 0 2939 1661">
<circle cx="2538.6" cy="1009.1" r="10.3" stroke="#6b747e" stroke-width="2" fill="none"/>
<rect x="2537.4" y="1007.3000000000001" width="2.4" height="8" rx="0.8" fill="#6b747e"/>
<circle cx="2538.6" cy="1003.7" r="1.5" fill="#6b747e"/>
</svg>
<div class="a" style="left:2573px;top:987.3px;width:115.4px;height:43.2px;border:2px solid #30353c;border-radius:14px;box-sizing:border-box"></div>
<div class="a" style="left:2574.7px;top:989px;width:62.3px;height:39.8px;background:#e0906a;border-radius:13px"></div>
<svg class="a" style="left:0;top:0" width="2939" height="1661" viewBox="0 0 2939 1661">
<path d="M2594.5 1004.5 V1002 A4.5 4.5 0 0 1 2599 997.5 H2602 M2610.5 997.5 H2613.5 A4.5 4.5 0 0 1 2618 1002 V1004.5 M2618 1012.5 V1015 A4.5 4.5 0 0 1 2613.5 1019.5 H2610.5 M2602 1019.5 H2599 A4.5 4.5 0 0 1 2594.5 1015 V1012.5" stroke="#ffffff" stroke-width="2.6" stroke-linecap="round" stroke-linejoin="round" fill="none" />
<rect x="2650.5" y="997.6" width="23" height="22.4" rx="4.5" stroke="#8f99a3" stroke-width="2.2" fill="none"/>
<rect x="2838.5" y="1000" width="22.5" height="23.5" rx="5" stroke="#8f99a3" stroke-width="2" fill="none"/>
<path d="M2835.5 1017 Q2834 1015 2834 1012 V1002 Q2834 996 2840 996 H2850 Q2853 996 2855 998" stroke="#8f99a3" stroke-width="2" stroke-linecap="round" stroke-linejoin="round" fill="none" />
</svg>
<div class="t r" style="left:2844.1px;top:1005.2px;font-size:15.26px;line-height:15.26px;font-weight:400;color:#a3acb7;transform:scaleX(1.506);">c</div>
<svg class="a" style="left:0;top:0" width="2939" height="1661" viewBox="0 0 2939 1661">
<path d="M2884.5 1004 A11.3 11.3 0 1 1 2883.5 1013.5 M2884 997.5 V1004.5 H2891" stroke="#8f99a3" stroke-width="2.2" stroke-linecap="round" stroke-linejoin="round" fill="none" />
</svg>
<div class="a" style="left:2364.5px;top:1039.4px;width:210.9px;height:63px;background:#131619;border:2px solid #30353c;border-radius:16px;box-sizing:border-box"></div>
<div class="a" style="left:2704.3px;top:1039.4px;width:210.9px;height:63px;background:#131619;border:2px solid #30353c;border-radius:16px;box-sizing:border-box"></div>
<div class="a" style="left:2364.5px;top:1119.2px;width:210.9px;height:63.1px;background:#131619;border:2px solid #30353c;border-radius:16px;box-sizing:border-box"></div>
<div class="a" style="left:2704.3px;top:1119.2px;width:210.9px;height:63.1px;background:#131619;border:2px solid #30353c;border-radius:16px;box-sizing:border-box"></div>
<svg class="a" style="left:0;top:0" width="2939" height="1661" viewBox="0 0 2939 1661">
<circle cx="2536" cy="1064.1000000000001" r="3.9" stroke="#cc875f" stroke-width="2.2" fill="none"/>
<circle cx="2552" cy="1078.7" r="3.9" stroke="#cc875f" stroke-width="2.2" fill="none"/>
<path d="M2545.5 1064.1000000000001 H2556.7 M2531.5 1078.7 H2542.5" stroke="#cc875f" stroke-width="2.2" stroke-linecap="round" stroke-linejoin="round" fill="none" />
<circle cx="2875.8" cy="1064.1000000000001" r="3.9" stroke="#cc875f" stroke-width="2.2" fill="none"/>
<circle cx="2891.8" cy="1078.7" r="3.9" stroke="#cc875f" stroke-width="2.2" fill="none"/>
<path d="M2885.3 1064.1000000000001 H2896.5 M2871.3 1078.7 H2882.3" stroke="#cc875f" stroke-width="2.2" stroke-linecap="round" stroke-linejoin="round" fill="none" />
<circle cx="2536" cy="1144.0" r="3.9" stroke="#cc875f" stroke-width="2.2" fill="none"/>
<circle cx="2552" cy="1158.6" r="3.9" stroke="#cc875f" stroke-width="2.2" fill="none"/>
<path d="M2545.5 1144.0 H2556.7 M2531.5 1158.6 H2542.5" stroke="#cc875f" stroke-width="2.2" stroke-linecap="round" stroke-linejoin="round" fill="none" />
<circle cx="2875.8" cy="1144.0" r="3.9" stroke="#cc875f" stroke-width="2.2" fill="none"/>
<circle cx="2891.8" cy="1158.6" r="3.9" stroke="#cc875f" stroke-width="2.2" fill="none"/>
<path d="M2885.3 1144.0 H2896.5 M2871.3 1158.6 H2882.3" stroke="#cc875f" stroke-width="2.2" stroke-linecap="round" stroke-linejoin="round" fill="none" />
<path d="M2591.8 1102.6 V1062.8 H2632 M2647.5 1062.8 H2688.1 V1102.6 M2591.8 1118.6 V1159.1 H2632 M2647.5 1159.1 H2688.1 V1118.6" stroke="#8f99a3" stroke-width="3" stroke-linecap="round" stroke-linejoin="round" fill="none" stroke-linecap="butt" stroke-linejoin="miter"/>
</svg>
<div class="t r" style="left:2362.7px;top:1201.2px;font-size:26.45px;line-height:26.45px;font-weight:400;color:#a3acb7;transform:scaleX(0.977);">Border Width</div>
<svg class="a" style="left:0;top:0" width="2939" height="1661" viewBox="0 0 2939 1661">
<circle cx="2526.7" cy="1207.9" r="3.9" stroke="#cc875f" stroke-width="2.2" fill="none"/>
<circle cx="2542.7" cy="1222.5" r="3.9" stroke="#cc875f" stroke-width="2.2" fill="none"/>
<path d="M2536.2 1207.9 H2547.3999999999996 M2522.2 1222.5 H2533.2" stroke="#cc875f" stroke-width="2.2" stroke-linecap="round" stroke-linejoin="round" fill="none" />
</svg>
<div class="t r" style="left:2651.0px;top:1201.2px;font-size:26.45px;line-height:26.45px;font-weight:400;color:#a3acb7;transform:scaleX(0.952);">Elevation</div>
<svg class="a" style="left:0;top:0" width="2939" height="1661" viewBox="0 0 2939 1661">
<circle cx="2768" cy="1207.9" r="3.9" stroke="#cc875f" stroke-width="2.2" fill="none"/>
<circle cx="2784" cy="1222.5" r="3.9" stroke="#cc875f" stroke-width="2.2" fill="none"/>
<path d="M2777.5 1207.9 H2788.7 M2763.5 1222.5 H2774.5" stroke="#cc875f" stroke-width="2.2" stroke-linecap="round" stroke-linejoin="round" fill="none" />
</svg>
<div class="a" style="left:2364.8px;top:1239.5px;width:262.6px;height:62.7px;background:#131619;border:2px solid #30353c;border-radius:16px;box-sizing:border-box"></div>
<div class="a" style="left:2652.2px;top:1239.5px;width:263.3px;height:62.7px;background:#131619;border:2px solid #30353c;border-radius:16px;box-sizing:border-box"></div>
<div class="t " style="left:2388.3px;top:1258.8px;font-size:23.84px;line-height:23.84px;font-weight:700;color:#ffffff;transform:scaleX(0.965);">5</div>
<div class="t r" style="left:2362.8px;top:1321.8px;font-size:26.31px;line-height:26.31px;font-weight:400;color:#a3acb7;transform:scaleX(0.943);">Min W</div>
<svg class="a" style="left:0;top:0" width="2939" height="1661" viewBox="0 0 2939 1661">
<circle cx="2447.4" cy="1328.9" r="3.9" stroke="#cc875f" stroke-width="2.2" fill="none"/>
<circle cx="2463.4" cy="1343.5" r="3.9" stroke="#cc875f" stroke-width="2.2" fill="none"/>
<path d="M2456.9 1328.9 H2468.1 M2442.9 1343.5 H2453.9" stroke="#cc875f" stroke-width="2.2" stroke-linecap="round" stroke-linejoin="round" fill="none" />
</svg>
<div class="t " style="left:2565.8px;top:1321.8px;font-size:26.31px;line-height:26.31px;font-weight:700;color:#ffffff;transform:scaleX(0.900);">PX</div>
<div class="t r" style="left:2605.3px;top:1321.8px;font-size:26.31px;line-height:26.31px;font-weight:400;color:#a3acb7;transform:scaleX(0.788);">%</div>
<div class="t r" style="left:2650.9px;top:1321.8px;font-size:26.31px;line-height:26.31px;font-weight:400;color:#a3acb7;transform:scaleX(0.977);">Min H</div>
<svg class="a" style="left:0;top:0" width="2939" height="1661" viewBox="0 0 2939 1661">
<circle cx="2730.9" cy="1328.9" r="3.9" stroke="#cc875f" stroke-width="2.2" fill="none"/>
<circle cx="2746.9" cy="1343.5" r="3.9" stroke="#cc875f" stroke-width="2.2" fill="none"/>
<path d="M2740.4 1328.9 H2751.6 M2726.4 1343.5 H2737.4" stroke="#cc875f" stroke-width="2.2" stroke-linecap="round" stroke-linejoin="round" fill="none" />
</svg>
<div class="t " style="left:2854.3px;top:1321.8px;font-size:26.31px;line-height:26.31px;font-weight:700;color:#ffffff;transform:scaleX(0.893);">PX</div>
<div class="t r" style="left:2892.6px;top:1321.8px;font-size:26.31px;line-height:26.31px;font-weight:400;color:#a3acb7;transform:scaleX(0.816);">%</div>
<div class="a" style="left:2364.8px;top:1360px;width:262.6px;height:62.2px;background:#131619;border:2px solid #30353c;border-radius:16px;box-sizing:border-box"></div>
<div class="a" style="left:2652.2px;top:1360px;width:263.3px;height:62.2px;background:#131619;border:2px solid #30353c;border-radius:16px;box-sizing:border-box"></div>
<svg class="a" style="left:0;top:0" width="2939" height="1661" viewBox="0 0 2939 1661">
<circle cx="2592.5" cy="1392.3" r="5.3" stroke="#8f99a3" stroke-width="2.2" fill="none"/>
<circle cx="2604.5" cy="1392.3" r="5.3" stroke="#8f99a3" stroke-width="2.2" fill="none"/>
<circle cx="2880.2" cy="1392.3" r="5.3" stroke="#8f99a3" stroke-width="2.2" fill="none"/>
<circle cx="2892.2" cy="1392.3" r="5.3" stroke="#8f99a3" stroke-width="2.2" fill="none"/>
</svg>
<div class="t r" style="left:2362.9px;top:1441.6px;font-size:27.18px;line-height:27.18px;font-weight:400;color:#a3acb7;transform:scaleX(0.890);">Max W</div>
<svg class="a" style="left:0;top:0" width="2939" height="1661" viewBox="0 0 2939 1661">
<circle cx="2453.4" cy="1448.9" r="3.9" stroke="#cc875f" stroke-width="2.2" fill="none"/>
<circle cx="2469.4" cy="1463.5" r="3.9" stroke="#cc875f" stroke-width="2.2" fill="none"/>
<path d="M2462.9 1448.9 H2474.1 M2448.9 1463.5 H2459.9" stroke="#cc875f" stroke-width="2.2" stroke-linecap="round" stroke-linejoin="round" fill="none" />
</svg>
<div class="t " style="left:2565.8px;top:1441.6px;font-size:27.18px;line-height:27.18px;font-weight:700;color:#ffffff;transform:scaleX(0.871);">PX</div>
<div class="t r" style="left:2605.3px;top:1441.6px;font-size:27.18px;line-height:27.18px;font-weight:400;color:#a3acb7;transform:scaleX(0.763);">%</div>
<div class="t r" style="left:2651.0px;top:1441.6px;font-size:27.18px;line-height:27.18px;font-weight:400;color:#a3acb7;transform:scaleX(0.926);">Max H</div>
<svg class="a" style="left:0;top:0" width="2939" height="1661" viewBox="0 0 2939 1661">
<circle cx="2736.5" cy="1448.9" r="3.9" stroke="#cc875f" stroke-width="2.2" fill="none"/>
<circle cx="2752.5" cy="1463.5" r="3.9" stroke="#cc875f" stroke-width="2.2" fill="none"/>
<path d="M2746.0 1448.9 H2757.2 M2732.0 1463.5 H2743.0" stroke="#cc875f" stroke-width="2.2" stroke-linecap="round" stroke-linejoin="round" fill="none" />
</svg>
<div class="t " style="left:2854.3px;top:1441.6px;font-size:27.18px;line-height:27.18px;font-weight:700;color:#ffffff;transform:scaleX(0.865);">PX</div>
<div class="t r" style="left:2892.6px;top:1441.6px;font-size:27.18px;line-height:27.18px;font-weight:400;color:#a3acb7;transform:scaleX(0.790);">%</div>
<div class="a" style="left:2364.8px;top:1480px;width:262.6px;height:62.4px;background:#131619;border:2px solid #30353c;border-radius:16px;box-sizing:border-box"></div>
<div class="a" style="left:2652.2px;top:1480px;width:263.3px;height:62.4px;background:#131619;border:2px solid #30353c;border-radius:16px;box-sizing:border-box"></div>
<svg class="a" style="left:0;top:0" width="2939" height="1661" viewBox="0 0 2939 1661">
<circle cx="2592.5" cy="1512.3" r="5.3" stroke="#8f99a3" stroke-width="2.2" fill="none"/>
<circle cx="2604.5" cy="1512.3" r="5.3" stroke="#8f99a3" stroke-width="2.2" fill="none"/>
<circle cx="2880.2" cy="1512.3" r="5.3" stroke="#8f99a3" stroke-width="2.2" fill="none"/>
<circle cx="2892.2" cy="1512.3" r="5.3" stroke="#8f99a3" stroke-width="2.2" fill="none"/>
</svg>
<div class="t r" style="left:2363.5px;top:1571.2px;font-size:26.45px;line-height:26.45px;font-weight:400;color:#a3acb7;transform:scaleX(0.970);">Clip Content</div>
<svg class="a" style="left:0;top:0" width="2939" height="1661" viewBox="0 0 2939 1661">
<circle cx="2527.3" cy="1585" r="10.3" stroke="#6b747e" stroke-width="2" fill="none"/>
<rect x="2526.1000000000004" y="1583.2" width="2.4" height="8" rx="0.8" fill="#6b747e"/>
<circle cx="2527.3" cy="1579.6" r="1.5" fill="#6b747e"/>
</svg>
<div class="a" style="left:2840px;top:1561.6px;width:77px;height:48px;border:2px solid #30353c;border-radius:24px;box-sizing:border-box"></div>
<div class="a" style="left:2341px;top:1631px;width:598px;height:2px;background:#30353c"></div>
<div class="a" style="left:2840px;top:1653.5px;width:68px;height:40px;border:2px solid #30353c;border-radius:20px;box-sizing:border-box"></div>
<div class="a" style="left:2845px;top:1657px;width:30px;height:30px;background:#2a2e35;border-radius:15px"></div>
<div class="a" style="left:2804px;top:1525.2px;width:96px;height:96px;background:#4a3ce4;border-radius:50%;box-shadow:0 2px 10px rgba(0,0,0,0.3)"></div>
<svg class="a" style="left:0;top:0" width="2939" height="1661" viewBox="0 0 2939 1661">
<path d="M2836 1548.6 H2868 A5 5 0 0 1 2873 1553.6 V1597 L2860.6 1591.8 H2836 A5 5 0 0 1 2831 1586.8 V1553.6 A5 5 0 0 1 2836 1548.6 Z" fill="#ffffff" />
<path d="M2837.4 1579 Q2851.8 1590 2866.7 1579" stroke="#4a3ce4" stroke-width="3.2" stroke-linecap="round" stroke-linejoin="round" fill="none" />
</svg>
</body></html>
